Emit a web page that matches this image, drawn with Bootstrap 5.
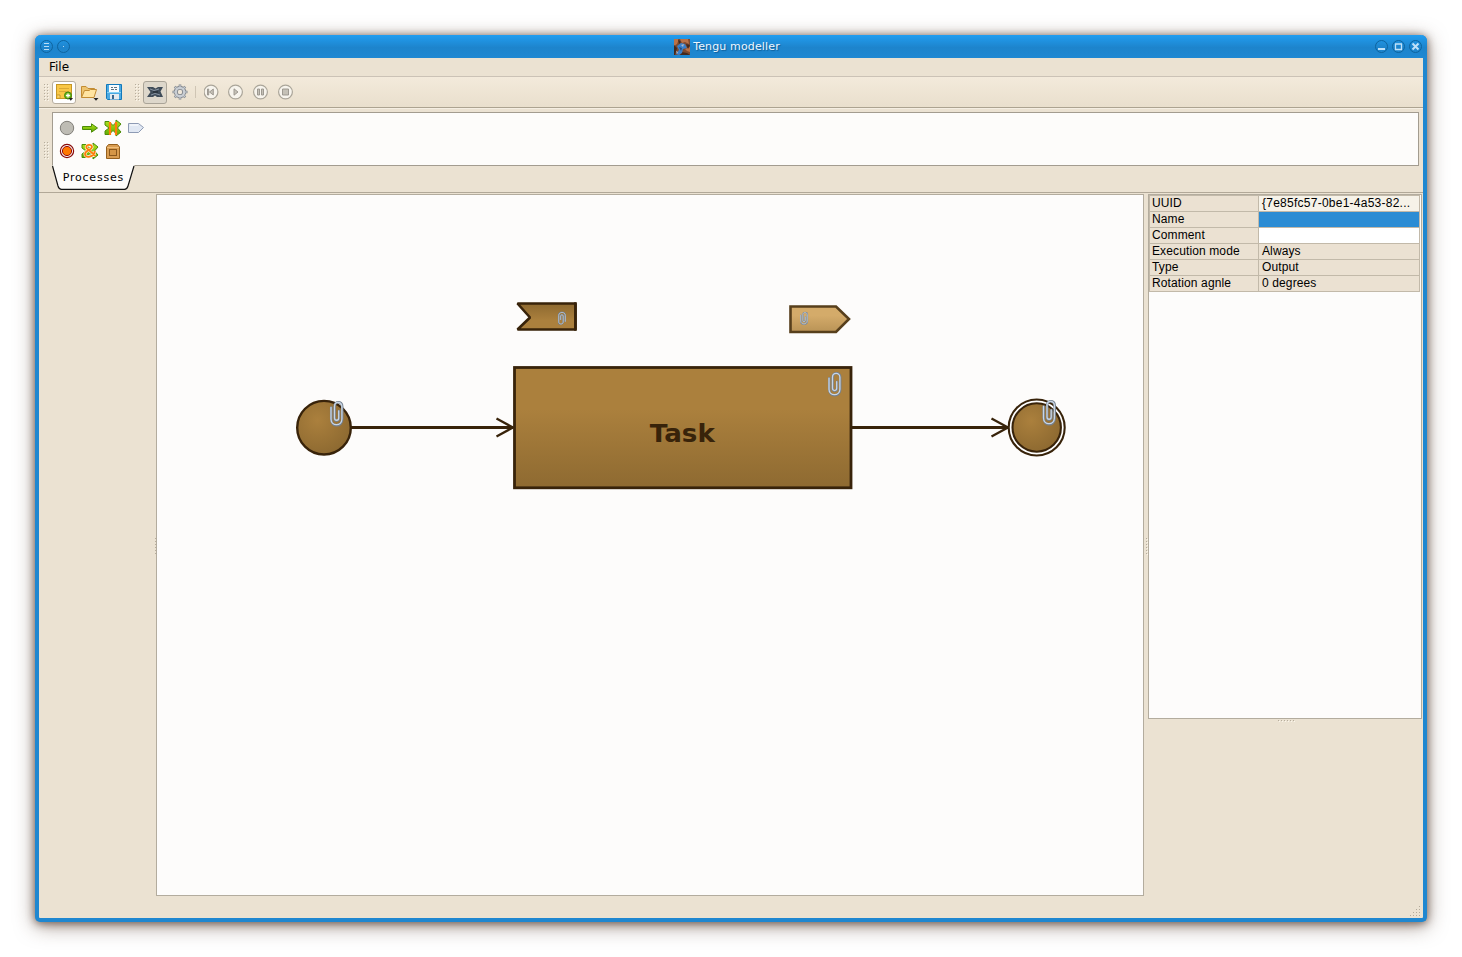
<!DOCTYPE html>
<html lang="en">
<head>
<meta charset="utf-8">
<title>Tengu modeller</title>
<link href="https://cdn.jsdelivr.net/npm/bootstrap@5.3.0/dist/css/bootstrap.min.css" rel="stylesheet">
<style>
body{background:#fff;overflow:hidden;color:#000;font-family:"DejaVu Sans",sans-serif;font-size:12px;line-height:1}
svg{display:block;flex:none}
.app-window{width:1392px;height:887px;margin:35px;background:#ebe2d2;border:solid #1f87d0;border-width:0 4px 4px;border-radius:6px 6px 5px 5px;box-shadow:inset 0 0 0 0 #fff,0 1px 9px rgba(75,50,35,.7),0 4px 20px rgba(75,50,35,.5)}
.title-bar{height:23px;margin:0 -4px;padding:0 5px;background:linear-gradient(#229df0,#1d84cc 55%,#1f88d2);border-radius:6px 6px 0 0;flex:none}
.title-text{color:#eef7ff;font-size:11px;letter-spacing:.15px;text-shadow:1px 1px 1px #0f5e98;gap:3px;padding-left:8px}
.menu-bar{height:19px;padding:0 10px;border-bottom:1px solid #cbc2b6;flex:none}
.tool-bar{height:31px;background:linear-gradient(#f3eadb,#e9dfcd);border-bottom:1px solid #aca391;padding:0 5px;flex:none}
.tool{width:24px;height:23px;display:flex;align-items:center;justify-content:center;border:1px solid transparent;border-radius:3px;padding:0;background:none;margin-left:1px}
.tool-first{margin-left:3px}
.tool-hot{background:#fff;border-color:#b7ae9f}
.tool-on{background:#ddd7cb;border-color:#aaa498}
.dots{background:conic-gradient(at 1px 1px,transparent 75%,#b6ad9d 0) 0 0/3px 3px,conic-gradient(at 1px 1px,transparent 75%,#fbf6ec 0) 1px 1px/3px 3px;flex:none}
.grip{width:5px;height:17px}
.grip-second{margin-left:9px}
.grip-low{margin-top:30px}
.grip-side{width:2px;height:17px}
.tool-sep{width:1px;height:12px;background:#cfc5b4;margin-left:3px}
.palette-row{height:85px;border-top:1px solid #f5eee2;border-bottom:1px solid #b1a898;padding:3px 4px 0 5px;flex:none}
.palette-box{height:54px;background:#fdfcfa;border:1px solid #a39c8f;padding:3px 2px}
.palette-grid{display:grid;width:92px;grid-template-columns:repeat(4,23px);grid-auto-rows:23px;place-items:center}
.tab-shape{margin-top:-1px;position:relative}
.work-area{padding:1px 1px 22px 0;min-height:0}
.stage{width:988px;border:1px solid #b3ac9e;background:#fdfcfb;flex:none}
.side-left{width:117px;flex:none}
.prop-panel{width:274px;height:525px;border:1px solid #b3ac9e;background:#fdfcfb}
.prop-list{width:271px;border-top:1px solid #c2b9a9;border-left:1px solid #c2b9a9;background:#ebe1d2;font-family:"Liberation Sans",sans-serif;font-size:12px;letter-spacing:.12px}
.prop-line{height:16px;line-height:14px;border-bottom:1px solid #c2b9a9}
.prop-key{width:109px;padding-left:2px;border-right:1px solid #c2b9a9;white-space:pre}
.prop-val{padding-left:3px;border-right:1px solid #c2b9a9;white-space:pre}
.v-read{background:#f6f2e8;letter-spacing:.25px}.v-sel{background:#2b8cd4}.v-edit{background:#fff}
.size-grip{margin-bottom:-22px}
</style>
</head>
<body>
<svg width="0" height="0" class="position-absolute">
 <defs>
  <symbol id="clip" viewBox="0 0 15 27" preserveAspectRatio="none"><g fill="none" stroke-linecap="round">
   <path d="M2.200 7V18.700C2.200 26.800 13.200 26.800 13.200 18.700V6C13.200 .2 5.600 .2 5.600 6V17.500C5.600 21 10 21 10 17.500V10.500" stroke="#74808f" stroke-width="2.500"/>
   <path d="M2 7V18.500C2 26 12.900 26 12.900 18.500V6C12.900 .6 5.500 .6 5.500 6V17.500C5.500 20.500 9.700 20.500 9.700 17.500V10.500" stroke="#c9d6e5" stroke-width="1.300"/></g></symbol>
  <linearGradient id="arr" x2="0" y2="1"><stop stop-color="#b5e61d"/><stop offset="1" stop-color="#5aa800"/></linearGradient>
  <symbol id="cross" viewBox="0 0 18 18"><path d="M1 2.500H5L9 6.500 12 3.500V1L17 5 13.500 9 17 13 12 17V14.500L9 11.500 5 15.500H1V12L5 9 1 6Z" fill="url(#arr)" stroke="#4c8c08"/></symbol>
  <linearGradient id="brown" x2="0" y2="1"><stop offset=".35" stop-color="#ab803d"/><stop offset="1" stop-color="#8e6a31"/></linearGradient>
  <linearGradient id="brownUp" x2="0" y2="1"><stop stop-color="#8d6930"/><stop offset=".65" stop-color="#ab803d"/></linearGradient>
  <linearGradient id="tan" x2="0" y2="1"><stop offset=".35" stop-color="#d4ab6a"/><stop offset="1" stop-color="#b99356"/></linearGradient>
  <radialGradient id="ball" cx=".38" cy=".36" r=".65"><stop stop-color="#ab803d"/><stop offset="1" stop-color="#8e6a31"/></radialGradient>
 </defs>
</svg>
<div class="app-window d-flex flex-column">
 <header class="title-bar d-flex align-items-center justify-content-between">
  <svg width="32" height="17" fill="none" stroke="#0e649f"><circle cx="6.500" cy="8.500" r="6"/><circle cx="23.500" cy="8.500" r="6"/><path d="M4 5.500H9M4 8.500H9M4 11.500H9M23 8.500H24" stroke="#b9dcf5"/></svg>
  <div class="d-flex align-items-center title-text">
   <svg width="16" height="16"><rect width="16" height="16" fill="#7d4a30"/><path d="M0 0H5L3 5 0 7ZM6 0H14L15 5 11 3 8 4ZM11 10L16 8V13L13 12Z" fill="#bb7146"/><path d="M0 6L3 9 1 16H0ZM12 5L16 6 14 10ZM4 0L7 3 5 5ZM8 13L13 14 16 16H6Z" fill="#42291f"/><path d="M3 7L7 4 11 5 13 9 9 10 8 14 5 16 2 15 5 11Z" fill="#397fca"/><path d="M7 6L10 5 9 8ZM2 12L4 13 3 15Z" fill="#b1b9c7"/><path d="M5 8L8 9 7 12Z" fill="#244b7d"/></svg>
   <span>Tengu modeller</span>
  </div>
  <svg width="48" height="17" fill="none" stroke="#0e649f"><circle cx="7.500" cy="8.500" r="6"/><circle cx="24.500" cy="8.500" r="6"/><circle cx="41.500" cy="8.500" r="6"/><path d="M4 11H11" stroke="#c1e1f8" stroke-width="2"/><path d="M21.500 6V11.500H27.500V6M21 6H28" stroke="#c1e1f8" stroke-width="1.300"/><path d="M38.500 5.500L44.500 11.500M44.500 5.500L38.500 11.500" stroke="#c1e1f8" stroke-width="2"/></svg>
 </header>
 <nav class="menu-bar d-flex align-items-center"><span>File</span></nav>
 <div class="tool-bar d-flex align-items-center">
  <div class="dots grip"></div>
  <button class="tool tool-first tool-hot" aria-label="New"><svg width="18" height="17"><rect x="1.500" y=".5" width="15" height="14" fill="#f9c746" stroke="#c59625"/><path d="M4 4.500H14M4 7.500H14" stroke="#dba936"/><path d="M2 11H5V14" fill="#ffe596" stroke="#c59625"/><circle cx="13" cy="11.500" r="3.500" fill="#70b91d" stroke="#3b8510"/><path d="M11 11.500H15M13 9.500V13.500" stroke="#fff" stroke-width="1.300"/><path d="M13.500 14H18L15.800 16.800Z" fill="#222"/></svg></button>
  <button class="tool" aria-label="Open"><svg width="19" height="17"><path d="M1.500 13.500V2.500H6L8 4.500H14.500V7" fill="#eec46f" stroke="#c38c32"/><path d="M1.500 13.500L4.500 6.500H9L10.500 5.500H16.500L14 13.500Z" fill="#ffe4a1" stroke="#c38c32"/><path d="M13.500 14H18.500L16 16.800Z" fill="#222"/></svg></button>
  <button class="tool" aria-label="Save"><svg width="16" height="16"><path d="M.5 .5H15.500V15.500H1.500L.5 14.500Z" fill="#4ba9e2" stroke="#1279bb"/><path d="M3 1H13V8H3Z" fill="#f8fbfd"/><path d="M5 3.500H7M8 3.500H11M5 5.500H8M9 5.500H11" stroke="#607381"/><path d="M4 10H13V15.500H4Z" fill="#e5eaee"/><path d="M6 11H8V15H6Z" fill="#39658c"/><path d="M1 8.500H15" stroke="#86d2f6"/></svg></button>
  <div class="dots grip grip-second"></div>
  <button class="tool tool-first tool-on" aria-label="Edit model"><svg width="16" height="12"><path d="M0 1H6L8.500 2.500 11 1H16L13.500 5.500 16 11H10L8 9.500 6 11H0L3.500 6Z" fill="#3f4c59"/><path d="M3 3L7 4.500 12 3M4 9L8 7.500 13 9" fill="none" stroke="#8995a4"/><path d="M6 6H11" stroke="#1c232b"/></svg></button>
  <button class="tool" aria-label="Settings"><svg width="16" height="16" fill="none"><g stroke="#83888d" stroke-width="2.600"><path d="M8 .5V15.500M.5 8H15.500M2.700 2.700L13.300 13.300M13.300 2.700L2.700 13.300"/></g><circle cx="8" cy="8" r="4.200" fill="#eee6d8" stroke="#858a90" stroke-width="4"/><g stroke="#c6cbd1" stroke-width="1.100"><path d="M8 1V4M8 12V15M1 8H4M12 8H15M3 3L5 5M11 11L13 13M13 3L11 5M5 11L3 13"/></g><circle cx="8" cy="8" r="4.200" stroke="#c9ced4" stroke-width="2.200"/></svg></button>
  <div class="tool-sep"></div>
  <svg class="ms-2" width="90" height="16" viewBox="1 0 90 16" fill="#f7f4ed" stroke="#aaa599"><g stroke-width="1.200"><circle cx="7.500" cy="8" r="6.900" transform="translate(.5)"/><circle cx="32.500" cy="8" r="6.900"/><circle cx="57.500" cy="8" r="6.900"/><circle cx="82.500" cy="8" r="6.900"/></g><g fill="#c5c1b7" stroke="#96928a" stroke-width=".9"><path d="M4.500 5H5.700V11H4.500ZM10.300 5V11L6.500 8ZM31 4.800V11.200L35 8ZM54.500 5H56.500V11H54.500ZM58.500 5H60.500V11H58.500ZM79.500 5H85.500V11H79.500Z"/></g></svg>
 </div>
 <section class="palette-row d-flex">
  <div class="dots grip grip-low"></div>
  <div class="flex-grow-1" style="margin-left:3px">
   <div class="palette-box"><div class="palette-grid">
    <svg width="16" height="16"><circle cx="8" cy="8" r="6.700" fill="#bebcb4" stroke="#817f79"/></svg>
    <svg width="18" height="16"><path d="M1.500 6.500H10.500V3.800L16.500 8 10.500 12.200V9.500H1.500Z" fill="url(#arr)" stroke="#4c8c08"/></svg>
    <svg width="18" height="18"><use href="#cross" width="18" height="18"/><path d="M6 3V16M12 3V16" stroke="#ff7d0a" stroke-width="2.200"/></svg>
    <svg width="18" height="16"><path d="M1.500 3.500H11.500L16.500 7.500 11.500 12.500H1.500Z" fill="#e1e8f3" stroke="#8e9bb4"/><path d="M3 5H11" stroke="#fff"/></svg>
    <svg width="16" height="16"><circle cx="8" cy="8" r="6.600" fill="#fff" stroke="#870807" stroke-width="1.200"/><circle cx="8" cy="8" r="4.600" fill="#ff7800" stroke="#960c08" stroke-width="1"/></svg>
    <svg width="18" height="18"><use href="#cross" width="18" height="18"/><path d="M14.500 14L5.500 6C4 2.500 11 1.500 11 5 11 8 4 8 4 12 4 17 13 15 14 9" fill="none" stroke="#fff3df" stroke-width="3"/><path d="M14.500 14L5.500 6C4 2.500 11 1.500 11 5 11 8 4 8 4 12 4 17 13 15 14 9" fill="none" stroke="#ff7d0a" stroke-width="1.800"/></svg>
    <svg width="16" height="16"><path d="M3.500 1.500H12.500L14.500 4V15.500H1.500V4Z" fill="#d99d51" stroke="#95601d"/><path d="M2 4.500H14" stroke="#f0bf7b"/><rect x="4.500" y="6.500" width="7" height="6" fill="#d59646" stroke="#8a581b"/></svg>
   </div></div>
   <svg class="tab-shape" width="84" height="26"><path d="M0 0H82.500L76 21Q75 24 72.500 24H9Q7 24 6 21L.5 0" fill="#fdfcfa"/><path d="M.5 1L6 21Q7 24.300 9.500 24.300H72.500Q75 24.300 76 21L82 1" fill="none" stroke="#111" stroke-width="1.200"/><text x="10.700" y="16" font-size="11" textLength="60.500">Processes</text></svg>
  </div>
 </section>
 <main class="work-area d-flex flex-grow-1">
  <div class="side-left d-flex align-items-center justify-content-end"><div class="dots grip-side" style="margin:2px -1px 0 0"></div></div>
  <div class="stage">
   <svg width="986" height="700" viewBox="157 195 986 700">
    <g stroke="#38230a" stroke-width="2.800">
     <path d="M517.500 303.500H575.500V329.500H517.500L530 317.500Z" fill="url(#brownUp)" stroke-width="2.600" stroke-linejoin="bevel"/>
     <path d="M575.500 302.200V330.800" stroke-width="2.600"/>
     <path d="M790.500 306.500H836L849 319 836 332H790.500Z" fill="url(#tan)" stroke="#573f1c" stroke-width="2.600"/>
     <path d="M351 427.500H513M852 427.500H1008" fill="none"/>
     <path d="M496.500 418.500L513 427.500 496.500 436.500M991.500 418.500L1008 427.500 991.500 436.500" fill="none" stroke-width="2.300"/>
     <rect x="514.500" y="367.500" width="336.500" height="120.300" fill="url(#brown)"/>
     <circle cx="324" cy="427.700" r="26.800" fill="url(#ball)" stroke-width="2.400"/>
     <circle cx="1036.700" cy="427.500" r="28" fill="#fff" stroke-width="2.100"/>
     <circle cx="1036.700" cy="427.500" r="24.200" fill="url(#ball)" stroke-width="2.100"/>
    </g>
    <text x="649.800" y="442" font-family="DejaVu Sans" font-size="24.500" font-weight="bold" fill="#38230a" textLength="65" lengthAdjust="spacingAndGlyphs">Task</text>
    <use href="#clip" x="329" y="400.500" width="15" height="27"/>
    <use href="#clip" x="1041.500" y="399.500" width="15" height="27"/>
    <use href="#clip" x="827" y="371.500" width="15" height="26"/>
    <use href="#clip" x="799.500" y="311.500" width="9" height="14"/>
    <use href="#clip" width="9" height="14" transform="translate(566.500 325) rotate(180)"/>
   </svg>
  </div>
  <div class="d-flex align-items-center" style="width:4px"><div class="dots grip-side" style="margin:2px 0 0 2px"></div></div>
  <aside class="d-flex flex-column align-items-center">
   <div class="prop-panel"><div class="prop-list">
    <div class="prop-line d-flex"><div class="prop-key">UUID</div><div class="prop-val v-read flex-grow-1">{7e85fc57-0be1-4a53-82...</div></div>
    <div class="prop-line d-flex"><div class="prop-key">Name</div><div class="prop-val v-sel flex-grow-1"></div></div>
    <div class="prop-line d-flex"><div class="prop-key">Comment</div><div class="prop-val v-edit flex-grow-1"></div></div>
    <div class="prop-line d-flex"><div class="prop-key">Execution mode</div><div class="prop-val flex-grow-1">Always</div></div>
    <div class="prop-line d-flex"><div class="prop-key">Type</div><div class="prop-val flex-grow-1">Output</div></div>
    <div class="prop-line d-flex"><div class="prop-key">Rotation agnle</div><div class="prop-val flex-grow-1">0 degrees</div></div>
   </div></div>
   <div class="dots" style="width:17px;height:2px;margin:1px 0 0 2px"></div>
   <svg class="size-grip mt-auto ms-auto" width="12" height="12" fill="#b3aa9a"><path d="M9 0h1v1h-1zM6 3h1v1h-1zM9 3h1v1h-1zM3 6h1v1h-1zM6 6h1v1h-1zM9 6h1v1h-1zM0 9h1v1h-1zM3 9h1v1h-1zM6 9h1v1h-1zM9 9h1v1h-1z"/></svg>
  </aside>
 </main>
</div>
<script src="https://cdn.jsdelivr.net/npm/bootstrap@5.3.0/dist/js/bootstrap.bundle.min.js"></script>
</body>
</html>
